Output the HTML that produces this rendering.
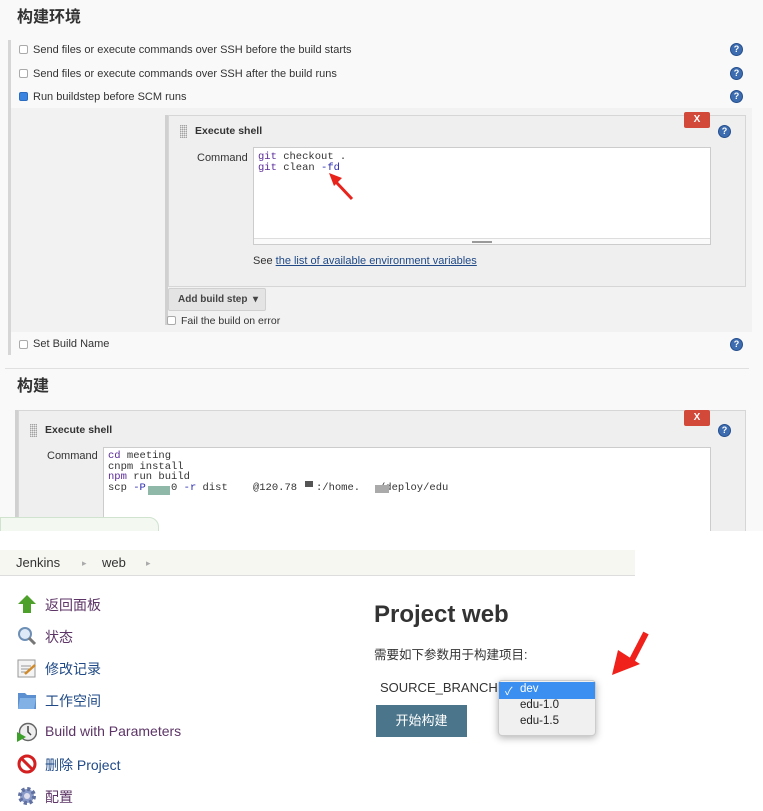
<!DOCTYPE html>
<html><head><meta charset="utf-8"><style>
*{margin:0;padding:0;box-sizing:border-box}
body{width:763px;height:811px;position:relative;overflow:hidden;background:#fff;font-family:"Liberation Sans","Noto Sans CJK SC",sans-serif;color:#333}
.a{position:absolute}
.t{font-size:11px;color:#333;white-space:nowrap}
.cb{position:absolute;width:9px;height:9px;border:1px solid #aaa;border-radius:2px;background:#fff}
.cbc{background:#3b84e0;border-color:#2a6cc0}
.help{position:absolute;width:13px;height:13px;border-radius:50%;background:#3d6db0;border:1px solid #254f8f;color:#fff;font-size:9px;font-weight:bold;text-align:center;line-height:11px}
.x{position:absolute;width:26px;height:16px;background:#d24939;color:#fff;font-size:10px;font-weight:bold;text-align:center;line-height:15px;border-radius:2px}
.mono{font-family:"Liberation Mono",monospace;font-size:10.5px;line-height:10.5px;color:#333;white-space:pre}
.kw{color:#5a2a9a}
.grip{position:absolute;width:7px;height:13px;background:repeating-linear-gradient(0deg,#ccc 0 1px,transparent 1px 2px),repeating-linear-gradient(90deg,#ccc 0 1px,transparent 1px 2px);background-blend-mode:multiply}
.side{position:absolute;left:45px;font-size:14px;white-space:nowrap}
.p{color:#5c3566}.b{color:#204a87}
.ic{position:absolute;left:17px;width:20px;height:20px}
</style></head><body>
<div class="a" style="left:0;top:0;width:763px;height:531px;background:#f9f9f9"></div>
<div class="a" style="left:17px;top:3px;font-size:16px;font-weight:bold;color:#333">构建环境</div>
<div class="a" style="left:8px;top:40px;width:3px;height:315px;background:#d6d6d6"></div>
<div class="cb" style="left:19px;top:45px"></div><div class="a t" style="left:33px;top:44px">Send files or execute commands over SSH before the build starts</div>
<div class="cb" style="left:19px;top:69px"></div><div class="a t" style="left:33px;top:68px">Send files or execute commands over SSH after the build runs</div>
<div class="cb cbc" style="left:19px;top:92px"></div><div class="a t" style="left:33px;top:91px">Run buildstep before SCM runs</div>
<div class="help" style="left:730px;top:43px">?</div>
<div class="help" style="left:730px;top:67px">?</div>
<div class="help" style="left:730px;top:90px">?</div>
<div class="a" style="left:11px;top:108px;width:741px;height:224px;background:#f2f2f2"></div>
<div class="a" style="left:165px;top:115px;width:3px;height:210px;background:#d0d0d0"></div>
<div class="a" style="left:168px;top:115px;width:578px;height:172px;background:#efefef;border:1px solid #d6d6d6"></div>
<div class="grip" style="left:180px;top:125px"></div>
<div class="a t" style="left:195px;top:125px;font-weight:bold;font-size:10.5px">Execute shell</div>
<div class="x" style="left:684px;top:112px">X</div>
<div class="help" style="left:718px;top:125px">?</div>
<div class="a t" style="left:197px;top:152px">Command</div>
<div class="a" style="left:253px;top:147px;width:458px;height:98px;background:#fff;border:1px solid #ccc"></div>
<div class="a" style="left:254px;top:238px;width:456px;height:6px;border-top:1px solid #ddd;background:#fafafa"></div>
<div class="a" style="left:472px;top:241px;width:20px;height:2px;background:#999"></div>
<div class="a mono" style="left:258px;top:152px"><span class="kw">git</span> checkout .
<span class="kw">git</span> clean <span style="color:#2a2ab0">-fd</span></div>
<svg class="a" style="left:326px;top:170px" width="28" height="32"><path d="M26 29 L10 12" stroke="#e8231c" stroke-width="3"/><path d="M3 3 L16 8 L8 16 Z" fill="#e8231c"/></svg>
<div class="a t" style="left:253px;top:255px">See <span style="color:#204a87;text-decoration:underline">the list of available environment variables</span></div>
<div class="a t" style="left:168px;top:288px;width:98px;height:23px;background:#e4e4e4;border:1px solid #d0d0d0;border-radius:2px;line-height:21px;padding-left:9px;font-size:10px;font-weight:bold;color:#444">Add build step &nbsp;▾</div>
<div class="cb" style="left:167px;top:316px"></div><div class="a t" style="left:181px;top:315px;font-size:10.5px">Fail the build on error</div>
<div class="cb" style="left:19px;top:340px"></div><div class="a t" style="left:33px;top:338px">Set Build Name</div>
<div class="help" style="left:730px;top:338px">?</div>
<div class="a" style="left:5px;top:368px;width:744px;height:1px;background:#e0e0e0"></div>
<div class="a" style="left:17px;top:372px;font-size:16px;font-weight:bold;color:#333">构建</div>
<div class="a" style="left:15px;top:410px;width:3px;height:121px;background:#d0d0d0"></div>
<div class="a" style="left:18px;top:410px;width:728px;height:130px;background:#efefef;border:1px solid #d6d6d6"></div>
<div class="grip" style="left:30px;top:424px"></div>
<div class="a t" style="left:45px;top:424px;font-weight:bold;font-size:10.5px">Execute shell</div>
<div class="x" style="left:684px;top:410px">X</div>
<div class="help" style="left:718px;top:424px">?</div>
<div class="a t" style="left:47px;top:450px">Command</div>
<div class="a" style="left:103px;top:447px;width:608px;height:90px;background:#fff;border:1px solid #ccc"></div>
<div class="a mono" style="left:108px;top:451px"><span class="kw">cd</span> meeting
cnpm install
<span class="kw">npm</span> run build
scp <span style="color:#2a2ab0">-P</span>    0 <span style="color:#2a2ab0">-r</span> dist    @120.78   :/home.   /deploy/edu</div>
<div class="a" style="left:148px;top:486px;width:22px;height:9px;background:#8fb8a8"></div>
<div class="a" style="left:305px;top:481px;width:8px;height:6px;background:#555"></div>
<div class="a" style="left:375px;top:485px;width:14px;height:8px;background:#aaa"></div>
<div class="a" style="left:0;top:517px;width:159px;height:20px;border:1px solid #cfe3cf;border-radius:0 10px 0 0;background:#f3f8f1"></div>
<div class="a" style="left:0;top:531px;width:763px;height:280px;background:#fff"></div>
<div class="a" style="left:0;top:550px;width:635px;height:26px;background:#f6f7f1;border-bottom:1px solid #ddd"></div>
<div class="a" style="left:16px;top:555px;font-size:13px;color:#333">Jenkins</div>
<div class="a" style="left:82px;top:555px;font-size:9px;color:#aaa;line-height:16px">▸</div>
<div class="a" style="left:102px;top:555px;font-size:13px;color:#333">web</div>
<div class="a" style="left:146px;top:555px;font-size:9px;color:#aaa;line-height:16px">▸</div>

<svg class="ic" style="top:594px"><path d="M10 1 L19 10 H14 V19 H6 V10 H1 Z" fill="#4da12a"/></svg>
<div class="side p" style="top:595px">返回面板</div>
<svg class="ic" style="top:626px"><circle cx="8" cy="8" r="6" fill="#dde9f6" stroke="#6d8fb5" stroke-width="2"/><path d="M12 12 L18 18" stroke="#777" stroke-width="3"/></svg>
<div class="side p" style="top:627px">状态</div>
<svg class="ic" style="top:658px"><rect x="1" y="2" width="17" height="17" fill="#f4f4f4" stroke="#999"/><path d="M4 8H14M4 11H12M4 14H10" stroke="#999"/><path d="M8 16 L18 7" stroke="#d08a2a" stroke-width="2.5"/></svg>
<div class="side b" style="top:659px">修改记录</div>
<svg class="ic" style="top:690px"><path d="M1 3 H8 L10 5 H19 V19 H1 Z" fill="#5b8fd0"/><path d="M3 8 H19 L17 19 H1 Z" fill="#82b1e6"/></svg>
<div class="side b" style="top:691px">工作空间</div>
<svg class="ic" style="top:722px"><circle cx="11" cy="10" r="8.5" fill="#eee" stroke="#666" stroke-width="1.5"/><path d="M11 4V10L14 13" stroke="#444" stroke-width="1.5" fill="none"/><path d="M0 10 L9 15 L0 20 Z" fill="#3ca02a"/></svg>
<div class="side p" style="top:723px">Build with Parameters</div>
<svg class="ic" style="top:754px"><circle cx="10" cy="10" r="8" fill="#fff" stroke="#d42020" stroke-width="3"/><path d="M4.5 4.5 L15.5 15.5" stroke="#d42020" stroke-width="3"/></svg>
<div class="side b" style="top:755px">删除 Project</div>
<svg class="ic" style="top:786px"><circle cx="10" cy="10" r="7" fill="#8a9ac8" stroke="#6070a0" stroke-width="4" stroke-dasharray="3 2.5"/><circle cx="10" cy="10" r="3" fill="#dde"/></svg>
<div class="side p" style="top:787px">配置</div>

<div class="a" style="left:374px;top:601px;font-size:24px;font-weight:bold;color:#333">Project web</div>
<div class="a" style="left:374px;top:644px;font-size:12.5px;color:#333">需要如下参数用于构建项目:</div>
<div class="a" style="left:380px;top:680px;font-size:13px;color:#333">SOURCE_BRANCH</div>
<div class="a" style="left:376px;top:705px;width:91px;height:32px;background:#4b758b;color:#fff;font-size:13px;text-align:center;line-height:32px">开始构建</div>
<div class="a" style="left:498px;top:680px;width:98px;height:56px;background:#f0f0f0;border-radius:4px;box-shadow:0 2px 8px rgba(0,0,0,.3);border:1px solid #ccc"></div>
<div class="a" style="left:499px;top:682px;width:96px;height:17px;background:#3a8ff0"></div>
<div class="a" style="left:505px;top:683px;font-size:11px;color:#fff">✓</div>
<div class="a" style="left:520px;top:683px;font-size:11.5px;color:#fff">dev</div>
<div class="a" style="left:520px;top:699px;font-size:11.5px;color:#222">edu-1.0</div>
<div class="a" style="left:520px;top:715px;font-size:11.5px;color:#222">edu-1.5</div>
<svg class="a" style="left:610px;top:630px" width="40" height="48"><path d="M36 3 L22 30" stroke="#f0201a" stroke-width="6"/><path d="M2 45 L8 20 L30 34 Z" fill="#f0201a"/></svg>
</body></html>
